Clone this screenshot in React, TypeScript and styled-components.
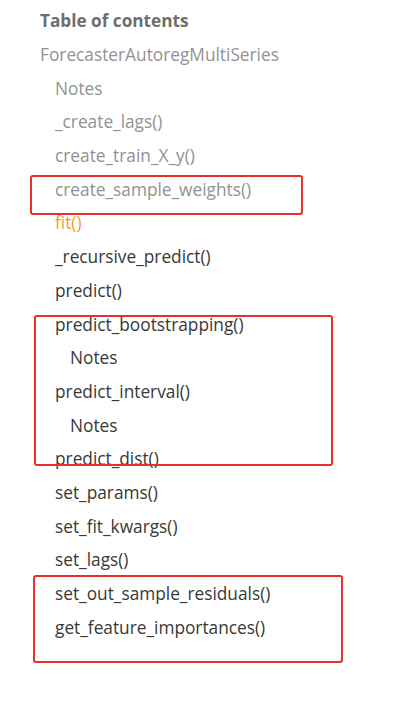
import React from 'react'
import styled, { createGlobalStyle } from 'styled-components'

const GlobalStyle = createGlobalStyle`
  html, body {
    margin: 0;
    padding: 0;
    background: #ffffff;
  }
  body {
    font-family: "Open Sans", "Noto Sans", sans-serif;
  }
`

const Page = styled.div`
  position: relative;
  width: 420px;
  height: 702px;
  overflow: hidden;
  background: #fff;
`

const Toc = styled.nav`
  padding: 4px 0 0 40px;
  display: flex;
  flex-direction: column;
`

const Title = styled.div`
  font-size: 17.2px;
  font-weight: 700;
  color: #6e6e6e;
  line-height: 34px;
  height: 34px;
`

type Tone = 'muted' | 'active' | 'normal'

const Entry = styled.div<{ $level: number; $tone: Tone }>`
  font-size: 17.3px;
  line-height: 33.7px;
  height: 33.7px;
  white-space: nowrap;
  padding-left: ${(p) => p.$level * 15}px;
  color: ${(p) =>
    p.$tone === 'muted' ? '#929292' : p.$tone === 'active' ? '#f39a34' : '#383838'};
`

const Mark = styled.div`
  position: absolute;
  border: 2px solid #e8302a;
  border-radius: 3px;
  box-sizing: border-box;
  pointer-events: none;
`

const entries: { text: string; level: number; tone: Tone }[] = [
  { text: 'ForecasterAutoregMultiSeries', level: 0, tone: 'muted' },
  { text: 'Notes', level: 1, tone: 'muted' },
  { text: '_create_lags()', level: 1, tone: 'muted' },
  { text: 'create_train_X_y()', level: 1, tone: 'muted' },
  { text: 'create_sample_weights()', level: 1, tone: 'muted' },
  { text: 'fit()', level: 1, tone: 'active' },
  { text: '_recursive_predict()', level: 1, tone: 'normal' },
  { text: 'predict()', level: 1, tone: 'normal' },
  { text: 'predict_bootstrapping()', level: 1, tone: 'normal' },
  { text: 'Notes', level: 2, tone: 'normal' },
  { text: 'predict_interval()', level: 1, tone: 'normal' },
  { text: 'Notes', level: 2, tone: 'normal' },
  { text: 'predict_dist()', level: 1, tone: 'normal' },
  { text: 'set_params()', level: 1, tone: 'normal' },
  { text: 'set_fit_kwargs()', level: 1, tone: 'normal' },
  { text: 'set_lags()', level: 1, tone: 'normal' },
  { text: 'set_out_sample_residuals()', level: 1, tone: 'normal' },
  { text: 'get_feature_importances()', level: 1, tone: 'normal' },
]

// annotation boxes drawn over the list
const marks = [
  { left: 30, top: 175, width: 273, height: 40 },
  { left: 34, top: 315, width: 299, height: 151 },
  { left: 33, top: 575, width: 310, height: 88 },
]

function App() {
  return (
    <>
      <GlobalStyle />
      <Page>
        <Toc>
          <Title>Table of contents</Title>
          {entries.map((el, index) => (
            <Entry key={index} $level={el.level} $tone={el.tone}>
              {el.text}
            </Entry>
          ))}
        </Toc>
        {marks.map((m, i) => (
          <Mark key={i} style={{ left: m.left, top: m.top, width: m.width, height: m.height }} />
        ))}
      </Page>
    </>
  )
}

export default App
